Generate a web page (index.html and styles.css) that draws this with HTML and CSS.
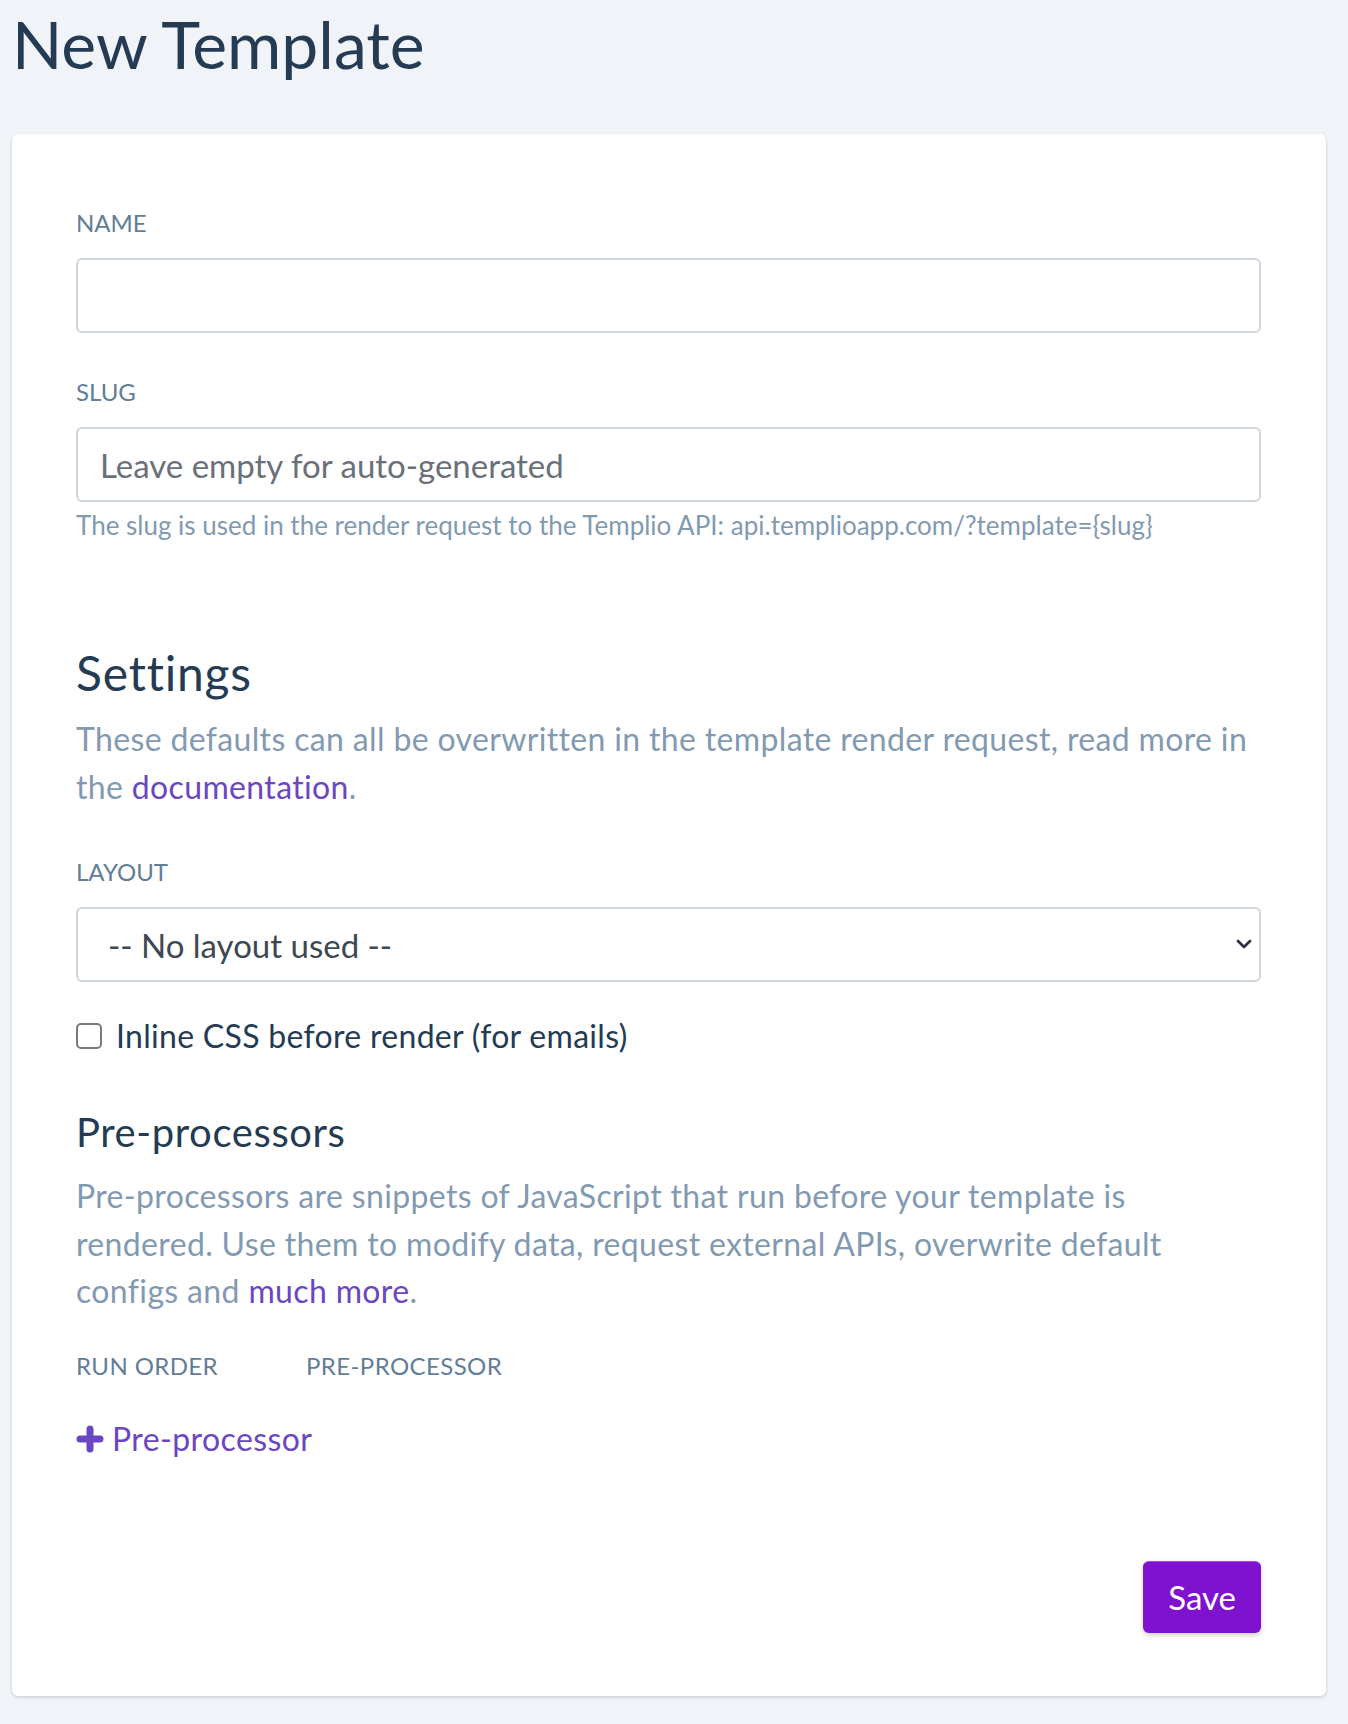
FILE: index.html
```html
<!DOCTYPE html>
<html lang="en">
<head>
<meta charset="utf-8">
<title>New Template</title>
<link rel="stylesheet" href="styles.css">
</head>
<body>
<div class="page">
  <h1 class="page-title">New Template</h1>
  <form class="card">
    <div class="field field-first">
      <label class="label" for="name">Name</label>
      <input class="input" id="name" type="text">
    </div>
    <div class="field">
      <label class="label" for="slug">Slug</label>
      <input class="input" id="slug" type="text" placeholder="Leave empty for auto-generated">
      <p class="help">The slug is used in the render request to the Templio API: api.templioapp.com/?template={slug}</p>
    </div>

    <h2 class="section-title">Settings</h2>
    <p class="lead">These defaults can all be overwritten in the template render request, read more in the <a href="#" class="link">documentation</a>.</p>

    <div class="field field-layout">
      <label class="label" for="layout">Layout</label>
      <div class="select-wrap">
        <select class="input select" id="layout">
          <option>-- No layout used --</option>
        </select>
        <svg class="chevron" viewBox="0 0 16 10" width="16" height="10" aria-hidden="true"><path d="M2 2 L8 8 L14 2" fill="none" stroke="#2d3440" stroke-width="2.8" stroke-linecap="round" stroke-linejoin="round"/></svg>
      </div>
    </div>

    <label class="check-row">
      <input type="checkbox" class="checkbox">
      <span>Inline CSS before render (for emails)</span>
    </label>

    <h3 class="sub-title">Pre-processors</h3>
    <p class="lead lead-pre">Pre-processors are snippets of JavaScript that run before your template is rendered. Use them to modify data, request external APIs, overwrite default configs and <a href="#" class="link">much more</a>.</p>

    <div class="cols">
      <span class="col-head col-order">Run order</span>
      <span class="col-head">Pre-processor</span>
    </div>

    <a href="#" class="add-link">
      <svg class="plus" viewBox="0 0 28 28" width="28" height="28" aria-hidden="true"><path d="M4 14H24M14 4V24" fill="none" stroke="currentColor" stroke-width="7" stroke-linecap="round"/></svg>
      <span>Pre-processor</span>
    </a>

    <div class="actions">
      <button type="button" class="btn-save">Save</button>
    </div>
  </form>
</div>
</body>
</html>
```

FILE: styles.css
```css
* { box-sizing: border-box; }

html, body {
  margin: 0;
  padding: 0;
  background: #f0f4f8;
}

body {
  font-family: "Lato", "Open Sans", sans-serif;
  color: #243b53;
}

.page {
  padding: 0 22px 27px 12px;
}

.page-title {
  margin: 0;
  padding-top: 4px;
  font-size: 66px;
  line-height: 80px;
  font-weight: 400;
  color: #243b53;
}

.card {
  margin-top: 50px;
  background: #ffffff;
  border-radius: 6px;
  box-shadow: 0 1px 3px rgba(0, 0, 0, 0.12), 0 2px 4px rgba(0, 0, 0, 0.06);
  padding: 73px 65px 63px 64px;
}

.field { margin-top: 43px; }
.field-first { margin-top: 0; }
.field-layout { margin-top: 46px; }

.label {
  display: block;
  font-size: 24px;
  line-height: 32px;
  text-transform: uppercase;
  color: #627d98;
  margin-bottom: 19px;
}

.input {
  display: block;
  width: 100%;
  height: 75px;
  border: 2px solid #cfd6dd;
  border-radius: 6px;
  background: #ffffff;
  padding: 0 22px;
  font-family: inherit;
  font-size: 33px;
  color: #3d4852;
  outline: none;
}

.input::placeholder { color: #69707a; opacity: 1; }

.help {
  margin: 6px 0 0;
  font-size: 26px;
  line-height: 34px;
  color: #829ab1;
}

.section-title {
  margin: 107px 0 0;
  font-size: 48px;
  line-height: 48px;
  letter-spacing: 0.8px;
  font-weight: 400;
  color: #243b53;
}

.lead {
  margin: 18px 0 0;
  font-size: 32px;
  line-height: 47.5px;
  letter-spacing: 0.35px;
  color: #829ab1;
}

.lead-pre { margin-top: 18px; }

.link {
  color: #6b46c1;
  text-decoration: none;
}

.select-wrap { position: relative; }

.select {
  -webkit-appearance: none;
  appearance: none;
  padding-left: 30px;
  color: #3d4852;
}

.chevron {
  position: absolute;
  right: 9px;
  top: 32px;
}

.check-row {
  display: flex;
  align-items: center;
  gap: 14px;
  margin-top: 36px;
  font-size: 32px;
  line-height: 36px;
  letter-spacing: 0.3px;
  color: #243b53;
}

.checkbox {
  -webkit-appearance: none;
  appearance: none;
  margin: 0;
  width: 26px;
  height: 26px;
  border: 2px solid #7a7a7a;
  border-radius: 5px;
  background: #fff;
  flex: none;
}

.sub-title {
  margin: 56px 0 0;
  font-size: 40px;
  line-height: 44px;
  letter-spacing: 0.6px;
  font-weight: 400;
  color: #243b53;
}

.cols {
  display: flex;
  margin-top: 35px;
}

.col-head {
  font-size: 24px;
  line-height: 32px;
  letter-spacing: 0.4px;
  text-transform: uppercase;
  color: #627d98;
}

.col-order { width: 230px; }

.add-link {
  display: inline-flex;
  align-items: center;
  gap: 8px;
  margin-top: 37px;
  font-size: 32px;
  line-height: 40px;
  letter-spacing: 0.4px;
  color: #6b46c1;
  text-decoration: none;
}

.plus { display: block; flex: none; }

.actions {
  display: flex;
  justify-content: flex-end;
  margin-top: 102px;
}

.btn-save {
  height: 72px;
  padding: 0 25px;
  border: none;
  border-top: 1px solid #a24be6;
  border-radius: 6px;
  background: #7e12cf;
  color: #ffffff;
  font-family: inherit;
  font-size: 33px;
  box-shadow: 0 2px 5px rgba(0, 0, 0, 0.22);
  cursor: pointer;
}
```
